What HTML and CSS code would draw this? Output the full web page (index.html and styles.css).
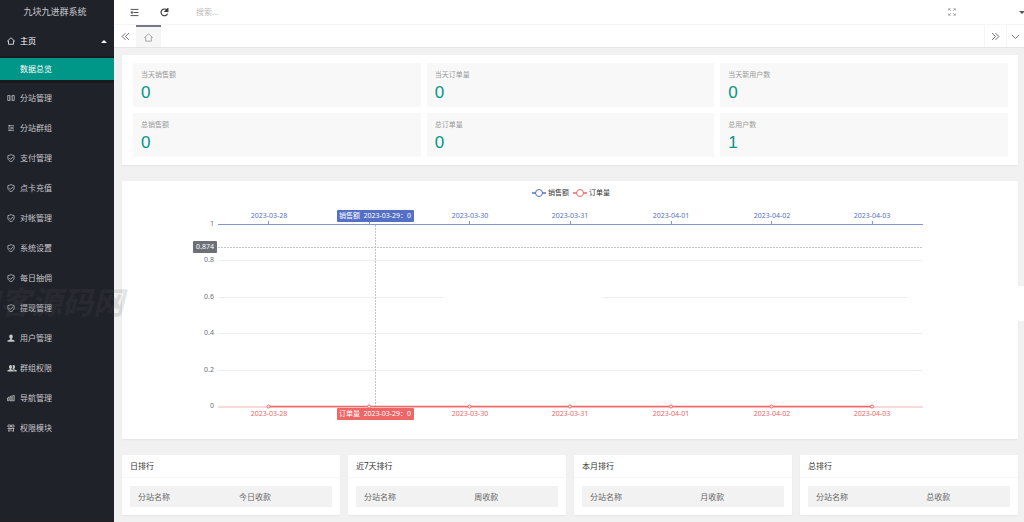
FILE: index.html
```html
<!DOCTYPE html>
<html lang="zh-CN">
<head>
<meta charset="utf-8">
<meta name="viewport" content="width=device-width, initial-scale=1">
<title>九块九进群系统</title>
<link rel="stylesheet" href="styles.css">
</head>
<body>
<svg class="defs" aria-hidden="true">
  <symbol id="shield" viewBox="0 0 16 16"><path d="M8 1C6 2.500 4 3 1.800 3.200V8c0 3.500 2.500 5.800 6.200 7.300 3.700-1.500 6.200-3.800 6.200-7.300V3.200C12 3 10 2.500 8 1zM4.500 8l2.700 2.700L12 6"/></symbol>
  <symbol id="home" viewBox="0 0 16 16"><path d="M3 14.500V8H1L8 1.500 15 8h-2v6.500z"/></symbol>
</svg>
<div class="app">
  <aside class="side">
    <h1 class="logo">九块九进群系统</h1>
    <nav class="menu">
      <a class="item item-open" href="#"><svg class="icon"><use href="#home"/></svg>主页<span class="caret"></span></a>
      <div class="submenu"><a class="sub" href="#">数据总览</a></div>
      <a class="item" href="#"><svg class="icon" viewBox="0 0 16 16"><path d="M1.500 3h4v10h-4zM10.500 3h4v10h-4zM8 3v2.500M8 7v2M8 10.500V13"/></svg>分站管理</a>
      <a class="item" href="#"><svg class="icon" viewBox="0 0 16 16"><path d="M2 3.500h12M2 8h12M2 12.500h12M5 2v3M10 6.500v3M6 11v3"/></svg>分站群组</a>
      <a class="item" href="#"><svg class="icon"><use href="#shield"/></svg>支付管理</a>
      <a class="item" href="#"><svg class="icon"><use href="#shield"/></svg>点卡充值</a>
      <a class="item" href="#"><svg class="icon"><use href="#shield"/></svg>对帐管理</a>
      <a class="item" href="#"><svg class="icon"><use href="#shield"/></svg>系统设置</a>
      <a class="item" href="#"><svg class="icon"><use href="#shield"/></svg>每日抽佣</a>
      <a class="item" href="#"><svg class="icon"><use href="#shield"/></svg>提现管理</a>
      <a class="item" href="#"><svg class="icon icon-solid" viewBox="0 0 16 16"><path d="M8 1c2.300 0 3.500 1.700 3.500 4 0 2-.8 3.500-2 4.300V11l5.500 2v2.500H1V13l5.500-2V9.300c-1.200-.8-2-2.300-2-4.300 0-2.300 1.200-4 3.500-4z"/></svg>用户管理</a>
      <a class="item" href="#"><svg class="icon icon-solid icon-wide" viewBox="0 0 20 16"><path d="M7 2c2 0 3 1.500 3 3.500S9.300 8.500 8.500 9.300V11l5 1.500V15H1v-2.500L5.500 11V9.300C4.700 8.500 4 7.500 4 5.500S5 2 7 2z"/><path d="M13 2c2 0 3 1.500 3 3.500S15.300 8.500 14.500 9.300V11l5 1.500V15h-5v-3L11 10.500V9c1-1 1.300-5 0-6.500z"/></svg>群组权限</a>
      <a class="item" href="#"><svg class="icon" viewBox="0 0 16 16"><path d="M1 13.500V8l3-2v7.500zM6 13.500V5l8.500-2v10.500zM8.500 6v7M11.500 5v8"/></svg>导航管理</a>
      <a class="item" href="#"><svg class="icon" viewBox="0 0 16 16"><path d="M2 2h5v4H2zM9 2h5v4H9zM1 9h14M4 9v5.500M8 9v5.500M13 9v5.500M2 14h4M10 14h4"/></svg>权限模块</a>
    </nav>
  </aside>
  <div class="body">
    <header class="topbar">
      <button class="tool" aria-label="折叠菜单"><svg class="icon icon-lg" viewBox="0 0 16 16"><path d="M1 2.500h14M6 8h9M1 13.500h14M4 6L1.500 8 4 10z"/></svg></button>
      <button class="tool" aria-label="刷新"><svg class="icon icon-lg icon-bold" viewBox="0 0 16 16"><path d="M13.500 10A6 6 0 1 1 12.500 4M14 1v5H9z"/></svg></button>
      <input class="search" type="text" placeholder="搜索..." aria-label="搜索">
      <button class="tool tool-full" aria-label="全屏"><svg class="icon icon-muted" viewBox="0 0 16 16"><path d="M1.500 5.500v-4h4M1.500 1.500l4.500 4.500M10.500 1.500h4v4M14.500 1.500L10 6M1.500 10.500v4h4M1.500 14.500L6 10M14.500 10.500v4h-4M14.500 14.500L10 10"/></svg></button>
      <button class="account" aria-label="账户"><span class="caret caret-down"></span></button>
    </header>
    <div class="tabs">
      <button class="tab" aria-label="向左"><svg class="icon icon-lg" viewBox="0 0 16 16"><path d="M8 2L2 8l6 6M14 2L8 8l6 6"/></svg></button>
      <button class="tab tab-active" aria-label="主页"><svg class="icon icon-lg icon-muted"><use href="#home"/></svg></button>
      <button class="tab tab-end" aria-label="向右"><svg class="icon icon-lg" viewBox="0 0 16 16"><path d="M2 2l6 6-6 6M8 2l6 6-6 6"/></svg></button>
      <button class="tab tab-more" aria-label="更多"><svg class="icon icon-lg" viewBox="0 0 16 16"><path d="M1.500 5L8 11.500 14.500 5"/></svg></button>
    </div>
    <main class="content">
      <section class="card stats">
        <div class="stat"><h3>当天销售额</h3><p>0</p></div>
        <div class="stat"><h3>当天订单量</h3><p>0</p></div>
        <div class="stat"><h3>当天新用户数</h3><p>0</p></div>
        <div class="stat"><h3>总销售额</h3><p>0</p></div>
        <div class="stat"><h3>总订单量</h3><p>0</p></div>
        <div class="stat"><h3>总用户数</h3><p>1</p></div>
      </section>
      <section class="card">
        <svg class="chart" viewBox="0 0 896 258" role="img" aria-label="销售额与订单量">
          <g class="blue"><path class="series" d="M410 12h14"/><circle class="ring" cx="417" cy="12" r="3.500"/></g>
          <text class="legend" x="426" y="14">销售额</text>
          <g class="red"><path class="series" d="M451 12h14"/><circle class="ring" cx="458" cy="12" r="3.500"/></g>
          <text class="legend" x="467" y="14">订单量</text>
          <path class="grid" d="M96 79.500H801M96 116.500H321M480 116.500H785M96 152.500H801M96 189.500H801"/>
          <g class="ylabels"><text x="92" y="45">1</text><text x="92" y="81">0.8</text><text x="92" y="118">0.6</text><text x="92" y="154">0.4</text><text x="92" y="191">0.2</text><text x="92" y="227">0</text></g>
          <path class="axis axis-blue" d="M96 43.500H801M146.500 40v3M247.500 40v3M347.500 40v3M448.500 40v3M549.500 40v3M649.500 40v3M750.500 40v3"/>
          <g class="dates dates-blue"><text x="147" y="37">2023-03-28</text><text x="348" y="37">2023-03-30</text><text x="448" y="37">2023-03-31</text><text x="549" y="37">2023-04-01</text><text x="650" y="37">2023-04-02</text><text x="750" y="37">2023-04-03</text></g>
          <path class="pointer" d="M96 66.500H801M253.500 44V225"/>
          <path class="axis axis-red" d="M96 226H801"/>
          <g class="red"><path class="series" d="M146 225.500H750"/><g class="dots"><circle cx="146.500" cy="225.500" r="1.500"/><circle cx="247" cy="225.500" r="1.500"/><circle cx="347.500" cy="225.500" r="1.500"/><circle cx="448" cy="225.500" r="1.500"/><circle cx="549" cy="225.500" r="1.500"/><circle cx="649.500" cy="225.500" r="1.500"/><circle cx="750" cy="225.500" r="1.500"/></g></g>
          <g class="dates dates-red"><text x="147" y="235">2023-03-28</text><text x="348" y="235">2023-03-30</text><text x="448" y="235">2023-03-31</text><text x="549" y="235">2023-04-01</text><text x="650" y="235">2023-04-02</text><text x="750" y="235">2023-04-03</text></g>
          <g class="tags">
            <rect class="tag-blue" x="215" y="29" width="77" height="12" rx="1"/><text x="253" y="37">销售额&#160; 2023-03-29：0</text>
            <rect class="tag-red" x="215" y="227" width="77" height="12" rx="1"/><text x="253" y="235">订单量&#160; 2023-03-29：0</text>
            <rect class="tag-grey" x="71" y="60" width="24" height="12" rx="1"/><text x="83" y="68">0.874</text>
          </g>
        </svg>
      </section>
      <div class="ranks">
        <section class="card rank"><h2>日排行</h2><table><tr><th>分站名称</th><th>今日收款</th></tr></table></section>
        <section class="card rank"><h2>近7天排行</h2><table><tr><th>分站名称</th><th>周收款</th></tr></table></section>
        <section class="card rank"><h2>本月排行</h2><table><tr><th>分站名称</th><th>月收款</th></tr></table></section>
        <section class="card rank"><h2>总排行</h2><table><tr><th>分站名称</th><th>总收款</th></tr></table></section>
      </div>
    </main>
  </div>
  <div class="watermark" aria-hidden="true">刀客源码网</div>
  <div class="blank" aria-hidden="true"></div>
</div>
</body>
</html>
```
FILE: styles.css
```css
* { box-sizing: border-box; margin: 0; padding: 0; }
body { font: 8px/12px "Noto Sans", "Noto Sans CJK SC", sans-serif; color: #666; background: #f1f1f1; }
button, input { font: inherit; color: inherit; border: 0; background: none; outline: 0; }
a { color: inherit; text-decoration: none; }
.defs { position: absolute; width: 0; height: 0; }
.app { position: relative; display: flex; min-height: 100vh; overflow: hidden; }

.icon { flex: none; width: 8px; height: 8px; fill: none; stroke: currentColor; stroke-width: 1.5; }
.icon-lg { width: 9px; height: 9px; }
.icon-bold { stroke-width: 2; }
.icon-solid { fill: currentColor; stroke: none; }
.icon-wide { width: 10px; margin-right: -2px; }
.icon-muted { color: #999; }

.side { flex: none; width: 114px; background: #20222a; color: #c7c8ca; border-bottom: 1px solid #2a1a20; }
.logo { height: 26px; font-size: 9px; font-weight: 400; line-height: 24px; text-align: center; padding-right: 4px; }
.menu { display: flex; flex-direction: column; }
.item { display: flex; align-items: center; gap: 5px; height: 30px; padding: 0 7px; }
.item-open { color: #fff; }
.caret { width: 0; margin-left: auto; border: 3px solid transparent; border-top-width: 0; border-bottom-color: #fff; }
.caret-down { border-width: 3px 3px 0; border-color: #555 transparent transparent; }
.submenu { padding: 2px 0 3px; background: #181a20; }
.sub { display: block; height: 22px; padding-left: 20px; line-height: 22px; color: #fff; background: #009688; }

.body { flex: 1; min-width: 0; }
.topbar { display: flex; align-items: center; height: 25px; padding-left: 16px; background: #fff; border-bottom: 1px solid #f6f6f6; color: #333; }
.tool { display: flex; width: 30px; }
.search { flex: 1; min-width: 0; padding-left: 6px; }
.search::placeholder { color: #bbb; opacity: 1; }
.tool-full { width: 71px; }
.account { width: 5px; overflow: hidden; }
.account .caret { display: block; margin: 0; }
.tabs { display: flex; height: 23px; background: #fff; border-bottom: 1px solid #e4e4e4; }
.tab { display: flex; align-items: center; justify-content: center; width: 22px; color: #555; }
.tab-active { width: 25px; background: #f6f6f6; border-top: 2px solid #777a82; }
.tab-end { margin-left: auto; border-left: 1px solid #f6f6f6; }
.tab-more { width: 18px; border-left: 1px solid #f6f6f6; }

.content { display: flex; flex-direction: column; gap: 16px; padding: 7px 6px 7px 8px; }
.card { background: #fff; border-radius: 1px; box-shadow: 0 1px 2px rgba(0, 0, 0, 0.05); }
.stats { display: grid; grid-template-columns: repeat(3, 1fr); gap: 6px; padding: 8px 10px 8px 11px; }
.stat { height: 44px; padding: 6px 8px; background: #f8f8f8; }
.stat h3 { font-size: 7px; font-weight: 400; color: #999; line-height: 11px; }
.stat p { font-family: "Liberation Sans", sans-serif; font-size: 17px; line-height: 26px; color: #009688; }

.chart { display: block; width: 100%; height: auto; font-size: 7px; }
.blue { color: #5470c6; }
.red { color: #ee6666; }
.series { stroke: currentColor; stroke-width: 1.5; fill: none; }
.ring, .dots circle { fill: #fff; stroke: currentColor; }
.legend { fill: #333; }
.grid { fill: none; stroke: #eceef5; }
.ylabels { fill: #6e7079; text-anchor: end; }
.axis { fill: none; }
.axis-blue { stroke: #7f95d5; }
.axis-red { stroke: #f7b2b2; }
.dates, .tags text { text-anchor: middle; }
.dates-blue { fill: #5470c6; }
.dates-red { fill: #ee6666; }
.pointer { fill: none; stroke: #c4c5c8; stroke-dasharray: 2 1; }
.tags text { fill: #fff; }
.tag-blue { fill: #5470c6; }
.tag-red { fill: #ee6666; }
.tag-grey { fill: #6e7079; }

.ranks { display: grid; grid-template-columns: repeat(4, 1fr); gap: 8px; }
.rank { padding-bottom: 8px; }
.rank h2 { height: 23px; padding: 0 8px; font-size: 8px; font-weight: 400; line-height: 22px; color: #333; border-bottom: 1px solid #f6f6f6; }
.rank table { width: calc(100% - 16px); margin: 8px 8px 0; border-collapse: collapse; background: #f2f2f2; }
.rank th { height: 21px; padding: 0 8px; font-weight: 400; text-align: left; }

.watermark { position: absolute; top: 284px; left: -31px; font-size: 31px; line-height: 36px; font-weight: 700; font-style: italic; color: rgba(90, 90, 90, 0.18); white-space: nowrap; pointer-events: none; }
.blank { position: absolute; top: 286px; right: 0; width: 6px; height: 35px; background: #fff; }
```
